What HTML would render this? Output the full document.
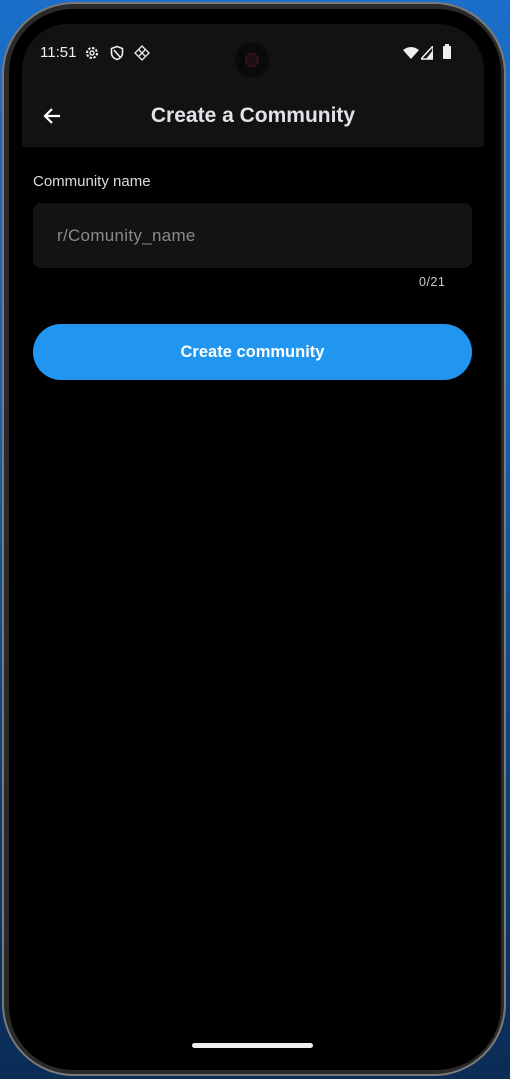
<!DOCTYPE html>
<html><head><style>
html,body{margin:0;padding:0}
body{width:510px;height:1079px;overflow:hidden;position:relative;background:linear-gradient(180deg,#1b6fc8 0%,#1560b0 40%,#0e3d70 75%,#0a2c55 100%);font-family:"Liberation Sans",Roboto,sans-serif}
.frame{position:absolute;left:2px;top:2px;width:504px;height:1074px;border-radius:72px;background:#2a2a2a;border:2px solid #7a7a7a;box-sizing:border-box}
.bezel{position:absolute;left:9px;top:9px;width:492px;height:1061px;border-radius:64px;background:#000}
.screen{position:absolute;left:22px;top:24px;width:462px;height:1035px;border-radius:46px;background:#000;overflow:hidden}
.appbar{position:absolute;left:0;top:0;width:462px;height:123px;background:#121212}
.t{position:absolute;color:#e6e6e6}
</style></head><body>
<div class="frame"></div>
<div class="bezel"></div>
<div class="screen">
 <div class="appbar"></div>
 <div class="t" style="left:18px;top:20px;font-size:15px;color:#eee">11:51</div>
 <svg style="position:absolute;left:62px;top:21px" width="16" height="16" viewBox="0 0 16 16"><circle cx="8" cy="8" r="5" fill="none" stroke="#eee" stroke-width="2" stroke-dasharray="2.5 1.4"/><circle cx="8" cy="8" r="2" fill="none" stroke="#eee" stroke-width="1.4"/></svg>
 <svg style="position:absolute;left:88px;top:21px" width="14" height="16" viewBox="0 0 14 16"><path d="M7 1.5L12.5 3.5V8c0 3.2-2.4 5.5-5.5 6.5C3.9 13.5 1.5 11.2 1.5 8V3.5Z M4 5L10 12" fill="none" stroke="#eee" stroke-width="1.6"/></svg>
 <svg style="position:absolute;left:112px;top:21px" width="16" height="16" viewBox="0 0 16 16"><path d="M8 1L15 8L8 15L1 8Z M5 5L11 11M11 5L5 11" fill="none" stroke="#eee" stroke-width="1.3"/></svg>
 <div style="position:absolute;left:213px;top:19px;width:34px;height:34px;border-radius:50%;background:#0a0a0a"><div style="position:absolute;left:10px;top:10px;width:14px;height:14px;border-radius:50%;background:#1a0d14;box-shadow:inset 0 0 3px #602030"></div></div>
 <svg style="position:absolute;left:381px;top:22px" width="16" height="14" viewBox="0 0 16 14"><path d="M0 4Q8 -2 16 4L8 13Z" fill="#eee"/></svg>
 <svg style="position:absolute;left:399px;top:22px" width="12" height="14" viewBox="0 0 12 14"><path d="M12 0V13H0Z" fill="none" stroke="#eee" stroke-width="1.5"/><path d="M12 4V13H5Z" fill="#eee"/></svg>
 <div style="position:absolute;left:421px;top:22px;width:8px;height:13px;background:#eee;border-radius:1px"></div>
 <div style="position:absolute;left:423px;top:20px;width:4px;height:2px;background:#eee"></div>
 <svg style="position:absolute;left:20px;top:82px" width="20" height="20" viewBox="0 0 20 20"><path d="M18 10H3M10 3L3 10L10 17" fill="none" stroke="#fff" stroke-width="2.2"/></svg>
 <div class="t" style="left:0;width:462px;text-align:center;top:80px;font-size:21px;font-weight:bold;color:#e4e0e8">Create a Community</div>
 <div class="t" style="left:11px;top:149px;font-size:15px;color:#ddd">Community name</div>
 <div style="position:absolute;left:11px;top:179px;width:439px;height:65px;border-radius:8px;background:#131313"></div>
 <div class="t" style="left:35px;top:202px;font-size:17px;color:#8a8a8a;letter-spacing:0.3px">r/Comunity_name</div>
 <div class="t" style="left:397px;top:251px;font-size:12.5px;color:#ccc;letter-spacing:0.5px">0/21</div>
 <div style="position:absolute;left:11px;top:300px;width:439px;height:56px;border-radius:28px;background:#2196f0"></div>
 <div class="t" style="left:11px;width:439px;text-align:center;top:319px;font-size:16.5px;font-weight:bold;color:#fff">Create community</div>
 <div style="position:absolute;left:170px;top:1019px;width:121px;height:5px;border-radius:3px;background:#eee"></div>
</div>
</body></html>
